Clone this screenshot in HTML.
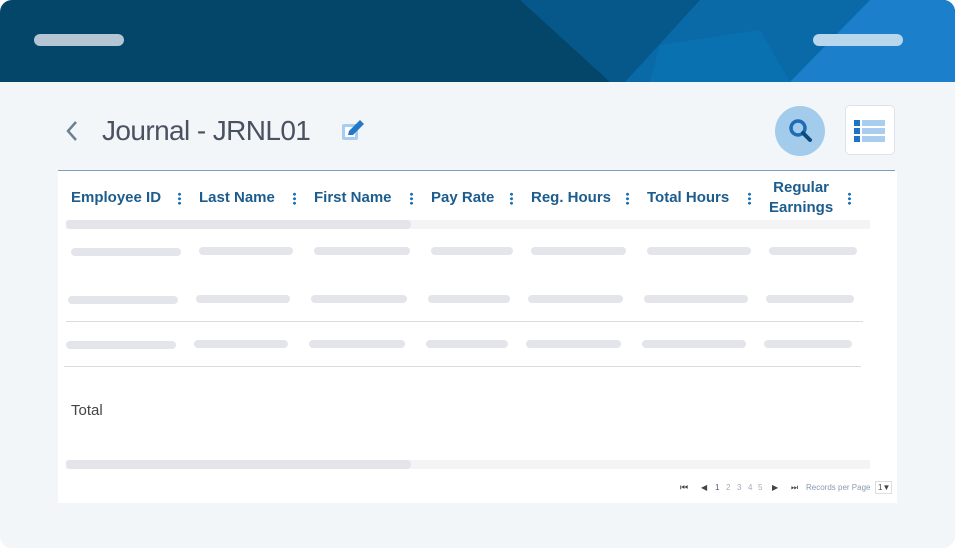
<!DOCTYPE html><html><head><style>
*{margin:0;padding:0;box-sizing:border-box}
body{width:955px;height:548px;background:#fff;font-family:"Liberation Sans",sans-serif;overflow:hidden;position:relative}
.card{position:absolute;left:0;top:0;width:955px;height:548px;border-radius:12px;background:#f3f6f9;overflow:hidden}
.hdr{position:absolute;left:0;top:0;width:955px;height:82px;background:#034669;overflow:hidden}
.pill{position:absolute;height:12px;border-radius:6px}
.b{position:absolute;background:#e3e5ea;height:8px;border-radius:4px}
.h{position:absolute;color:#1c5d8e;font-weight:bold;font-size:15px;text-align:center;line-height:20px}
.k{position:absolute;width:3px;height:13px;top:192px;background:radial-gradient(circle,#1c73b8 1.4px,transparent 1.6px) 0 0/3px 4.5px repeat-y}
.pg{position:absolute;font-size:8px;color:#aab;top:483px}
</style></head><body><div class="card">
<div class="hdr">
<svg width="955" height="82" style="position:absolute;left:0;top:0">
<polygon points="520,0 955,0 955,82 610,82" fill="#06588a"/>
<polygon points="700,0 955,0 955,82 625,82" fill="#0a6aa7"/>
<polygon points="660,45 760,30 790,82 650,82" fill="#0a73b4" opacity=".8"/>
<polygon points="870,0 955,0 955,82 790,82" fill="#1b7fcc"/>
</svg>
<div class="pill" style="left:34px;top:34px;width:90px;background:#b4c5d3"></div>
<div class="pill" style="left:813px;top:34px;width:90px;background:#b8d6ec"></div>
</div>
<svg style="position:absolute;left:64px;top:120px" width="14" height="22"><path d="M12 2 L4 11 L12 20" stroke="#6c7f95" stroke-width="2.5" fill="none"/></svg>
<div style="position:absolute;left:102px;top:115px;font-size:28px;color:#4a5262;letter-spacing:-0.6px">Journal - JRNL01</div>
<svg style="position:absolute;left:340px;top:118px" width="28" height="26"><rect x="2" y="6" width="16" height="16" rx="2" fill="#a9cdee"/><rect x="5" y="9" width="10" height="10" fill="#fff"/><path d="M8 17 L9 13 L20 2 L24 6 L13 17 Z" fill="#2279c5"/></svg>
<div style="position:absolute;left:775px;top:106px;width:50px;height:50px;border-radius:50%;background:#a3cbec"></div>
<svg style="position:absolute;left:784px;top:114px" width="32" height="32"><circle cx="14" cy="14" r="7" stroke="#1c6db3" stroke-width="3.5" fill="none"/><path d="M19 19 L26 26" stroke="#0e4a7a" stroke-width="4" stroke-linecap="round"/></svg>
<div style="position:absolute;left:845px;top:105px;width:50px;height:50px;border-radius:5px;background:#fff;border:1px solid #dde3ea"></div>
<svg style="position:absolute;left:854px;top:118px" width="32" height="26"><g fill="#1c73c8"><rect x="0" y="2" width="6" height="6"/><rect x="0" y="10" width="6" height="6"/><rect x="0" y="18" width="6" height="6"/></g><g fill="#a9cdee"><rect x="8" y="2" width="23" height="6"/><rect x="8" y="10" width="23" height="6"/><rect x="8" y="18" width="23" height="6"/></g></svg>
<div style="position:absolute;left:58px;top:170px;width:837px;height:1px;background:#7a9ec0"></div>
<div style="position:absolute;left:58px;top:171px;width:839px;height:332px;background:#fff"></div>
<div class="h" style="left:71px;top:188px">Employee ID</div><div class="k" style="left:178px"></div>
<div class="h" style="left:199px;top:188px">Last Name</div><div class="k" style="left:293px"></div>
<div class="h" style="left:314px;top:188px">First Name</div><div class="k" style="left:410px"></div>
<div class="h" style="left:431px;top:188px">Pay Rate</div><div class="k" style="left:510px"></div>
<div class="h" style="left:531px;top:188px">Reg. Hours</div><div class="k" style="left:626px"></div>
<div class="h" style="left:647px;top:188px">Total Hours</div><div class="k" style="left:748px"></div>
<div class="h" style="left:769px;top:178px">Regular<br>Earnings</div><div class="k" style="left:848px"></div>
<div style="position:absolute;left:66px;top:220px;width:804px;height:9px;background:#f4f4f6"></div>
<div class="b" style="left:66px;top:220px;width:345px;height:9px"></div>
<div class="b" style="left:71px;top:248px;width:110px"></div><div class="b" style="left:199px;top:247px;width:94px"></div><div class="b" style="left:314px;top:247px;width:96px"></div><div class="b" style="left:431px;top:247px;width:82px"></div><div class="b" style="left:531px;top:247px;width:95px"></div><div class="b" style="left:647px;top:247px;width:104px"></div><div class="b" style="left:769px;top:247px;width:88px"></div>
<div class="b" style="left:68px;top:296px;width:110px"></div><div class="b" style="left:196px;top:295px;width:94px"></div><div class="b" style="left:311px;top:295px;width:96px"></div><div class="b" style="left:428px;top:295px;width:82px"></div><div class="b" style="left:528px;top:295px;width:95px"></div><div class="b" style="left:644px;top:295px;width:104px"></div><div class="b" style="left:766px;top:295px;width:88px"></div>
<div style="position:absolute;left:66px;top:321px;width:797px;height:1px;background:#d8dbe0"></div>
<div class="b" style="left:66px;top:341px;width:110px"></div><div class="b" style="left:194px;top:340px;width:94px"></div><div class="b" style="left:309px;top:340px;width:96px"></div><div class="b" style="left:426px;top:340px;width:82px"></div><div class="b" style="left:526px;top:340px;width:95px"></div><div class="b" style="left:642px;top:340px;width:104px"></div><div class="b" style="left:764px;top:340px;width:88px"></div>
<div style="position:absolute;left:64px;top:366px;width:797px;height:1px;background:#d8dbe0"></div>
<div style="position:absolute;left:71px;top:402px;font-size:15px;color:#444">Total</div>
<div style="position:absolute;left:66px;top:460px;width:804px;height:9px;background:#f4f4f6"></div>
<div class="b" style="left:66px;top:460px;width:345px;height:9px"></div>
<div class="pg" style="left:680px;color:#444;font-size:9px;top:482px">⏮</div>
<div class="pg" style="left:701px;color:#444">◀</div>
<div class="pg" style="left:715px;color:#557">1</div>
<div class="pg" style="left:726px">2</div><div class="pg" style="left:737px">3</div><div class="pg" style="left:748px">4</div><div class="pg" style="left:758px">5</div>
<div class="pg" style="left:772px;color:#444">▶</div>
<div class="pg" style="left:791px;color:#444">⏭</div>
<div class="pg" style="left:806px;color:#8a9ab0">Records per Page</div>
<div style="position:absolute;left:875px;top:481px;width:17px;height:13px;border:1px solid #ddd;font-size:8px;color:#444;line-height:11px;padding-left:2px">1▼</div>
</div></body></html>
